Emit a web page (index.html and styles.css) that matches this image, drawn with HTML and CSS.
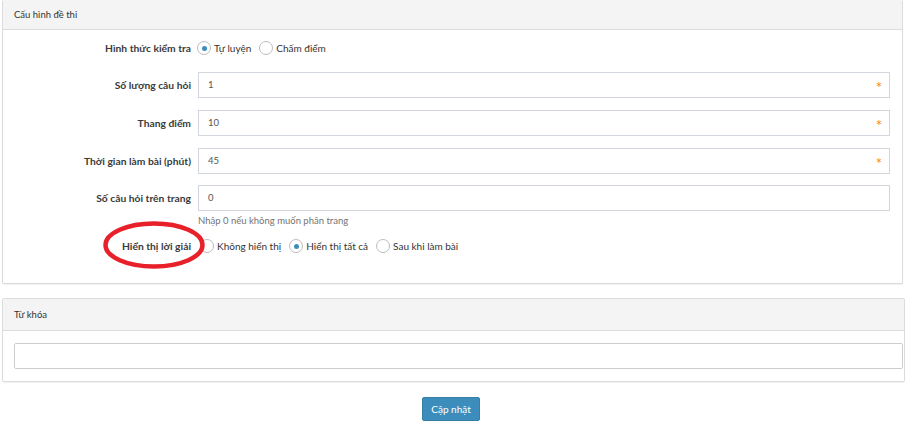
FILE: index.html
```html
<!DOCTYPE html>
<html lang="vi">
<head>
<meta charset="utf-8">
<title>Cấu hình đề thi</title>
<link rel="stylesheet" href="styles.css">
</head>
<body>
<div class="page">
  <div class="panel panel-config">
    <div class="panel-head">Cấu hình đề thi</div>
    <div class="panel-body">
      <div class="row row-radio">
        <div class="label">Hình thức kiểm tra</div>
        <div class="control radios">
          <span class="opt"><span class="radio checked"></span>Tự luyện</span>
          <span class="opt"><span class="radio"></span>Chấm điểm</span>
        </div>
      </div>
      <div class="row row-first-input">
        <div class="label">Số lượng câu hỏi</div>
        <div class="control"><div class="input">1<span class="req">*</span></div></div>
      </div>
      <div class="row">
        <div class="label">Thang điểm</div>
        <div class="control"><div class="input">10<span class="req">*</span></div></div>
      </div>
      <div class="row">
        <div class="label">Thời gian làm bài (phút)</div>
        <div class="control"><div class="input">45<span class="req">*</span></div></div>
      </div>
      <div class="row row-last-input">
        <div class="label">Số câu hỏi trên trang</div>
        <div class="control">
          <div class="input">0</div>
          <div class="help">Nhập 0 nếu không muốn phân trang</div>
        </div>
      </div>
      <div class="row row-radio row-solution">
        <div class="label">Hiển thị lời giải</div>
        <div class="control radios">
          <span class="opt"><span class="radio"></span>Không hiển thị</span>
          <span class="opt"><span class="radio checked"></span>Hiển thị tất cả</span>
          <span class="opt"><span class="radio"></span>Sau khi làm bài</span>
        </div>
        <svg class="mark" width="110" height="54" viewBox="0 0 110 54"><ellipse cx="54" cy="26" rx="48.5" ry="21.5" fill="none" stroke="#e8202a" stroke-width="4.5"/></svg>
      </div>
    </div>
  </div>

  <div class="panel panel-keyword">
    <div class="panel-head">Từ khóa</div>
    <div class="panel-body kw-body">
      <div class="input kw-input"></div>
    </div>
  </div>

  <div class="actions">
    <span class="btn">Cập nhật</span>
  </div>
</div>
</body>
</html>
```

FILE: styles.css
```css
html, body {
  margin: 0;
  padding: 0;
  background: #ffffff;
}
body {
  font-family: "Lato", "Liberation Sans", Arial, sans-serif;
  font-size: 10px;
  color: #333;
}
.page {
  padding: 0 0 0 2px;
  width: 901px;
}
.panel {
  border: 1px solid #dcdcdc;
  border-radius: 2px;
  background: #fff;
  box-shadow: 0 1px 1px rgba(0,0,0,0.06);
}
.panel-config {
  border-top: none;
}
.panel-head {
  background: #f4f4f4;
  height: 29px;
  line-height: 29px;
  border-bottom: 1px solid #dcdcdc;
  padding-left: 11px;
  font-size: 9.5px;
  color: #333;
}
.panel-config .panel-head {
  height: 29px;
  line-height: 30px;
}
.panel-body {
  padding: 5px 12px 24px 0;
  display: flex;
  flex-direction: column;
  gap: 12px;
}
.row {
  display: flex;
  align-items: flex-start;
  position: relative;
}
.label {
  width: 195px;
  flex: none;
  text-align: right;
  padding-right: 7px;
  box-sizing: border-box;
  font-weight: 700;
  font-size: 10.3px;
  line-height: 26px;
  height: 26px;
  color: #3a3a3a;
}
.control {
  flex: 1;
}
.row-radio .label,
.row-radio .control {
  height: 26px;
  line-height: 26px;
}
.row-first-input,
.row-last-input {
  margin-top: -1px;
}
.radios {
  display: flex;
  align-items: center;
  gap: 8px;
  margin-left: -1px;
}
.opt {
  display: inline-flex;
  align-items: center;
  gap: 3px;
  color: #333;
}
.radio {
  width: 12px;
  height: 12px;
  border: 1px solid #bdbdbd;
  border-radius: 50%;
  background: #fff;
  position: relative;
  flex: none;
}
.radio.checked::after {
  content: "";
  position: absolute;
  left: 3.5px;
  top: 3.5px;
  width: 5px;
  height: 5px;
  border-radius: 50%;
  background: #3c8dbc;
}
.input {
  position: relative;
  height: 26px;
  box-sizing: border-box;
  border: 1px solid #d2d6de;
  line-height: 24px;
  padding-left: 9px;
  font-size: 9.5px;
  color: #555;
  background: #fff;
}
.req {
  position: absolute;
  right: 7px;
  top: 2px;
  color: #f5821f;
  font-size: 15px;
  line-height: 24px;
  font-weight: 400;
}
.help {
  margin-top: 3px;
  font-size: 9.5px;
  color: #737373;
  line-height: 14px;
}
.row-solution {
  margin-top: -7px;
}
.row-solution .radios {
  margin-left: 2px;
}
.mark {
  position: absolute;
  left: 97px;
  top: -14px;
}
.panel-keyword {
  margin-top: 14px;
  width: 901px;
}
.panel-keyword .panel-head {
  height: 31px;
  line-height: 31px;
}
.kw-body {
  padding: 12px 0 12px 11px;
}
.kw-input {
  width: 889px;
  border: 1px solid #ccc;
  border-radius: 2px;
}
.actions {
  display: flex;
  justify-content: center;
  padding-top: 15px;
  margin-left: -3px;
}
.btn {
  display: inline-block;
  background: #3c8dbc;
  border: 1px solid #367fa9;
  color: #fff;
  font-size: 10px;
  height: 22px;
  line-height: 22px;
  padding: 0 8px;
  border-radius: 2px;
}
```
